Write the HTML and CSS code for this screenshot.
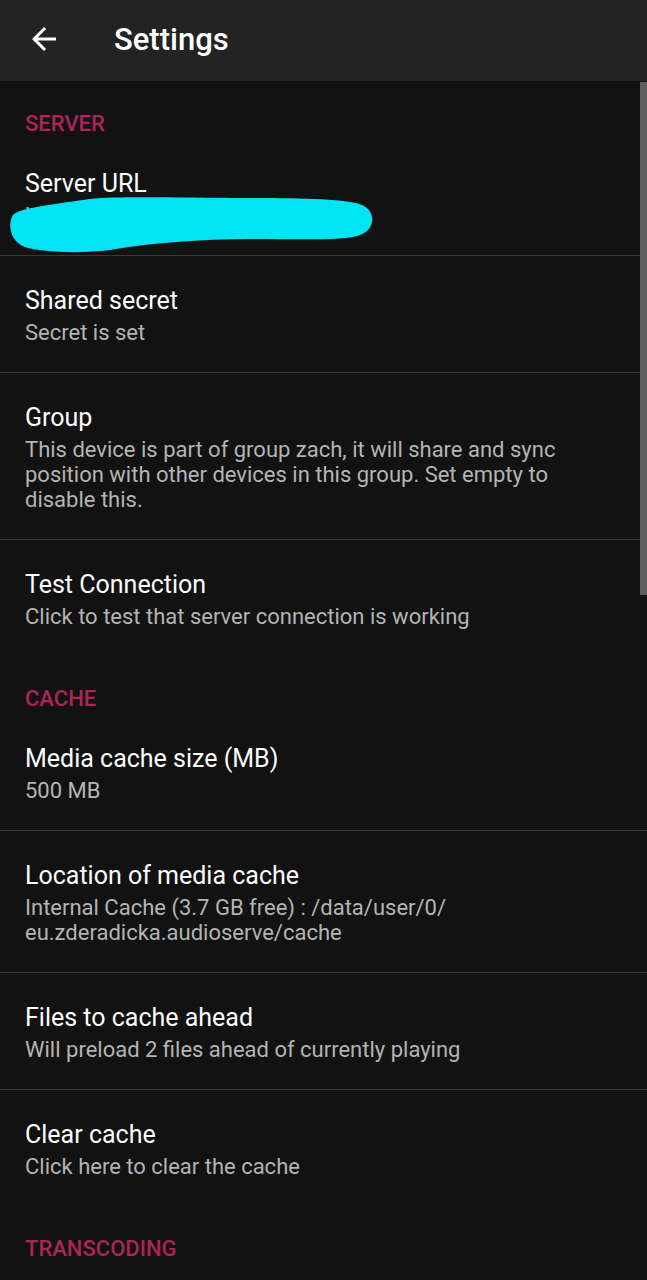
FILE: index.html
```html
<!DOCTYPE html>
<html>
<head>
<meta charset="utf-8">
<link rel="stylesheet" href="styles.css">
</head>
<body>
<div class="app">
  <header class="toolbar">
    <svg class="back" viewBox="0 0 24 24" width="36" height="36"><path fill="#fff" d="M20 11H7.83l5.59-5.59L12 4l-8 8 8 8 1.41-1.41L7.83 13H20v-2z"/></svg>
    <div class="title">Settings</div>
  </header>
  <main class="list">
    <div class="scrollbar"></div>
    <div class="category">SERVER</div>
    <div class="pref divided redacted">
      <div class="ptitle">Server URL</div>
      <div class="psub">h</div>
      <svg class="blob" viewBox="0 0 380 70" width="380" height="70"><path fill="#00e4f4" d="M12 28 C14 20 40 17 90 10 C120 7 180 9 250 9 C300 9 350 10 362 16 C376 22 376 40 360 46 C345 52 300 50 250 50 C200 50 150 54 110 61 C80 65 40 63 25 58 C10 52 8 36 12 28 Z"/></svg>
    </div>
    <div class="pref divided">
      <div class="ptitle">Shared secret</div>
      <div class="psub">Secret is set</div>
    </div>
    <div class="pref divided">
      <div class="ptitle">Group</div>
      <div class="psub">This device is part of group zach, it will share and sync position with other devices in this group. Set empty to disable this.</div>
    </div>
    <div class="pref">
      <div class="ptitle">Test Connection</div>
      <div class="psub">Click to test that server connection is working</div>
    </div>
    <div class="category">CACHE</div>
    <div class="pref divided">
      <div class="ptitle">Media cache size (MB)</div>
      <div class="psub">500 MB</div>
    </div>
    <div class="pref divided">
      <div class="ptitle">Location of media cache</div>
      <div class="psub">Internal Cache (3.7 GB free) : /data/user/0/<br>eu.zderadicka.audioserve/cache</div>
    </div>
    <div class="pref divided">
      <div class="ptitle">Files to cache ahead</div>
      <div class="psub">Will preload 2 files ahead of currently playing</div>
    </div>
    <div class="pref">
      <div class="ptitle">Clear cache</div>
      <div class="psub">Click here to clear the cache</div>
    </div>
    <div class="category">TRANSCODING</div>
  </main>
</div>
</body>
</html>
```

FILE: styles.css
```css
html, body {
  margin: 0;
  padding: 0;
  background: #121212;
}
body {
  font-family: Roboto, "Noto Sans", sans-serif;
  color: #fff;
  width: 647px;
  height: 1280px;
  overflow: hidden;
}
.app {
  display: flex;
  flex-direction: column;
  height: 1280px;
}
.toolbar {
  height: 81px;
  background: #232323;
  display: flex;
  align-items: center;
  flex-shrink: 0;
}
.back {
  margin-left: 26px;
  margin-top: -4px;
  flex-shrink: 0;
}
.title {
  margin-left: 52px;
  font-size: 31px;
  font-weight: 500;
  color: #fff;
  margin-top: -2px;
}
.list {
  position: relative;
  flex: 1;
  overflow: hidden;
}
.scrollbar {
  position: absolute;
  right: 0;
  top: 1px;
  width: 7px;
  height: 513px;
  background: #5e5e5e;
  z-index: 2;
}
.category {
  padding: 31px 25px 2px;
  height: 24px;
  line-height: 24px;
  font-size: 22px;
  font-weight: 500;
  color: #ad2458;
}
.pref {
  position: relative;
  padding: 30px 25px 27px;
}
.pref.divided {
  border-bottom: 1px solid #373737;
}
.pref.divided + .pref, .pref.divided + .category {
  margin-top: -1px;
}
.ptitle {
  font-size: 25px;
  line-height: 32px;
  color: #fdfdfd;
}
.psub {
  margin-top: 3px;
  font-size: 22px;
  line-height: 25px;
  color: #b4b4b4;
  padding-right: 60px;
}
.blob {
  position: absolute;
  left: 0;
  top: 51px;
}
```
